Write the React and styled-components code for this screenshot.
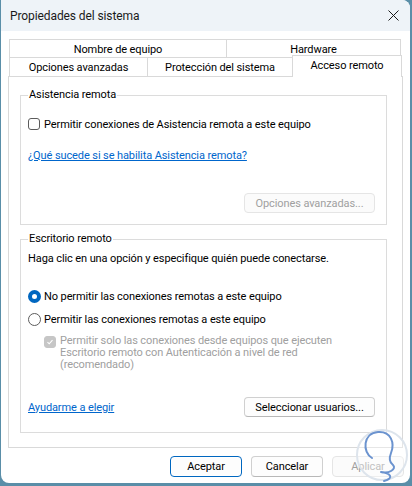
import React from 'react';
import styled, { createGlobalStyle } from 'styled-components';

const GlobalStyle = createGlobalStyle`
  html, body {
    margin: 0;
    padding: 0;
  }
  body {
    width: 412px;
    height: 486px;
    overflow: hidden;
    background: #5a8ea8;
    font-family: Roboto, "Noto Sans", sans-serif;
    font-size: 11px;
    letter-spacing: -0.1px;
    color: #000;
  }
  * {
    box-sizing: border-box;
  }
`;

const Window = styled.div`
  position: relative;
  margin-left: 1px;
  width: 409px;
  height: 483px;
  background: #fff;
  border-radius: 0 8px 8px 8px;
  overflow: hidden;
  display: flex;
  flex-direction: column;
`;

const TitleBar = styled.div`
  height: 31px;
  flex-shrink: 0;
  background: #eef3f8;
  display: flex;
  align-items: center;
  justify-content: space-between;
  padding: 0 11px 0 9px;
  font-size: 12px;
  color: #1a1a1a;
`;

const Body = styled.div`
  flex: 1;
  padding: 9px 7px 0 7px;
  display: flex;
  flex-direction: column;
`;

const TabStrip = styled.div`
  display: flex;
  flex-direction: column;
  padding-left: 2px;
`;

const TabRow = styled.div`
  display: flex;
  align-items: flex-end;
  height: 18px;
`;

const Tab = styled.div`
  position: relative;
  width: ${p => p.$w + 1}px;
  height: ${p => (p.$active ? 22 : 19)}px;
  margin-left: -1px;
  margin-bottom: ${p => (p.$active ? -1 : 0)}px;
  z-index: ${p => (p.$active ? 2 : 1)};
  border: 1px solid #d9d9d9;
  border-bottom: none;
  background: #fff;
  display: flex;
  align-items: ${p => (p.$active ? 'flex-start' : 'center')};
  padding-top: ${p => (p.$active ? 3 : 0)}px;
  justify-content: center;
  white-space: nowrap;
`;

const Panel = styled.div`
  height: 372px;
  border: 1px solid #d9d9d9;
  padding: 18px 15px 0 11px;
  display: flex;
  flex-direction: column;
`;

const Group = styled.div`
  height: ${p => p.$h}px;
  margin-top: ${p => p.$mt || 0}px;
  border: 1px solid #dcdcdc;
  padding: 0 11px 0 7px;
  display: flex;
  flex-direction: column;
`;

const Legend = styled.div`
  align-self: flex-start;
  margin-top: -8px;
  padding: 0 1px;
  height: 14px;
  line-height: 14px;
  background: #fff;
`;

const Line = styled.div`
  display: flex;
  align-items: center;
  height: 14px;
  margin-top: ${p => p.$mt}px;
  margin-left: ${p => p.$ml || 0}px;
  white-space: nowrap;
`;

const Box = styled.span`
  width: 12px;
  height: 12px;
  flex-shrink: 0;
  margin-right: 4px;
  border-radius: 3px;
  border: 1px solid ${p => (p.$disabled ? '#c6c6c6' : '#5c5c5c')};
  background: ${p => (p.$disabled ? '#c6c6c6' : '#fff')};
  display: flex;
  align-items: center;
  justify-content: center;
`;

const Radio = styled.span`
  width: 13px;
  height: 13px;
  flex-shrink: 0;
  margin-right: 3px;
  border-radius: 50%;
  border: ${p => (p.$on ? '4px solid #0067c0' : '1px solid #5c5c5c')};
  background: #fff;
`;

const Link = styled.a`
  color: #0066cc;
  text-decoration: underline;
  cursor: pointer;
`;

const Button = styled.button`
  width: ${p => p.$w}px;
  height: ${p => p.$h || 20}px;
  padding: 0;
  font-family: inherit;
  font-size: 11px;
  letter-spacing: -0.1px;
  color: ${p => (p.disabled ? '#a0a0a0' : '#000')};
  background: ${p => (p.disabled ? '#fbfbfb' : '#fdfdfd')};
  border: 1px solid ${p => (p.$primary ? '#0067c0' : p.disabled ? '#e5e5e5' : '#d0d0d0')};
  border-bottom-color: ${p => (p.$primary ? '#0067c0' : p.disabled ? '#e5e5e5' : '#b8b8b8')};
  border-radius: 4px;
  box-shadow: ${p => (p.$primary ? 'inset 0 0 0 1px #fff' : 'none')};
`;

const ButtonRow = styled.div`
  display: flex;
  align-items: center;
  justify-content: ${p => p.$justify || 'flex-end'};
  gap: 9px;
  margin-top: ${p => p.$mt}px;
  margin-right: ${p => p.$mr || 0}px;
`;

const CheckBlock = styled.div`
  display: flex;
  align-items: flex-start;
  margin: 9px 0 0 16px;
  color: #a0a0a0;
  line-height: 12px;
  & > span {
    margin-top: 1px;
  }
`;

const Watermark = styled.svg`
  position: absolute;
  left: 353px;
  top: 428px;
  pointer-events: none;
`;

const CloseIcon = () => (
  <svg width="11" height="11" viewBox="0 0 11 11">
    <path d="M0.5 0.5 L10.5 10.5 M10.5 0.5 L0.5 10.5" stroke="#1a1a1a" strokeWidth="1" fill="none" />
  </svg>
);

const Check = () => (
  <svg width="8" height="8" viewBox="0 0 8 8">
    <path d="M1.5 4.2 L3.2 5.8 L6.5 2.2" stroke="#fff" strokeWidth="1.1" fill="none" />
  </svg>
);

export default function App() {
  return (
    <>
      <GlobalStyle />
      <Window>
        <TitleBar>
          <span>Propiedades del sistema</span>
          <CloseIcon />
        </TitleBar>
        <Body>
          <TabStrip>
            <TabRow>
              <Tab $w={217}>Nombre de equipo</Tab>
              <Tab $w={174}>Hardware</Tab>
            </TabRow>
            <TabRow>
              <Tab $w={138}>Opciones avanzadas</Tab>
              <Tab $w={145}>Protección del sistema</Tab>
              <Tab $w={109} $active>Acceso remoto</Tab>
            </TabRow>
          </TabStrip>
          <Panel>
            <Group $h={130}>
              <Legend>Asistencia remota</Legend>
              <Line $mt={15}>
                <Box />
                Permitir conexiones de Asistencia remota a este equipo
              </Line>
              <Line $mt={17}>
                <Link>¿Qué sucede si se habilita Asistencia remota?</Link>
              </Line>
              <ButtonRow $mt={31}>
                <Button $w={131} disabled>Opciones avanzadas...</Button>
              </ButtonRow>
            </Group>
            <Group $h={194} $mt={14}>
              <Legend>Escritorio remoto</Legend>
              <Line $mt={5}>Haga clic en una opción y especifique quién puede conectarse.</Line>
              <Line $mt={24}>
                <Radio $on />
                No permitir las conexiones remotas a este equipo
              </Line>
              <Line $mt={9}>
                <Radio />
                Permitir las conexiones remotas a este equipo
              </Line>
              <CheckBlock>
                <Box $disabled>
                  <Check />
                </Box>
                <div>
                  Permitir solo las conexiones desde equipos que ejecuten
                  <br />
                  Escritorio remoto con Autenticación a nivel de red
                  <br />
                  (recomendado)
                </div>
              </CheckBlock>
              <ButtonRow $mt={26} $justify="space-between">
                <Link>Ayudarme a elegir</Link>
                <Button $w={131} $h={20}>Seleccionar usuarios...</Button>
              </ButtonRow>
            </Group>
          </Panel>
          <ButtonRow $mt={8} $mr={-1}>
            <Button $w={72} $h={21} $primary>Aceptar</Button>
            <Button $w={72} $h={21}>Cancelar</Button>
            <Button $w={72} $h={21} disabled>Aplicar</Button>
          </ButtonRow>
        </Body>
        <Watermark width="58" height="56" viewBox="0 0 58 56">
          <circle cx="28" cy="27" r="25" fill="rgba(255,255,255,0.35)" stroke="#dde4ec" strokeWidth="2" />
          <path
            d="M18 30 C8 24 9 5 24 4 C37 3 41 15 37 25 C35 30 35 34 39 37 C43 41 35 46 27 44 M27 44 C36 45 41 50 30 53"
            stroke="#6b93cf"
            strokeWidth="2"
            fill="none"
            strokeLinecap="round"
          />
        </Watermark>
      </Window>
    </>
  );
}
